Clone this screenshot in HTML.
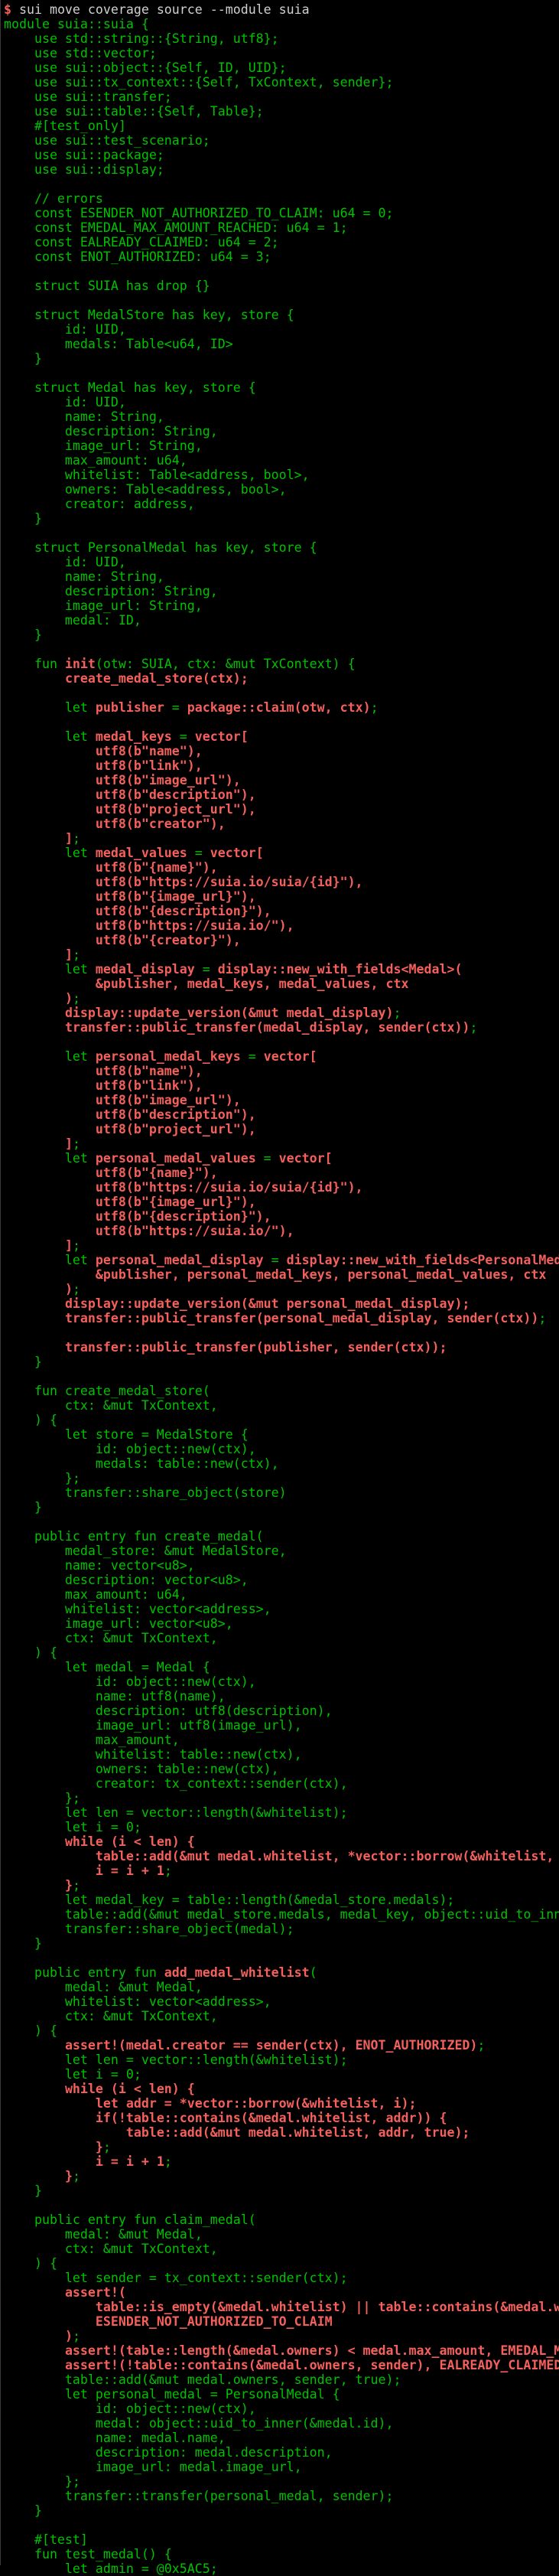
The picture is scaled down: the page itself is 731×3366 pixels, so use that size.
<!DOCTYPE html>
<html><head><meta charset="utf-8"><style>
html,body{margin:0;padding:0;background:#000;}
body{width:731px;height:3352px;overflow:hidden;border-left:1px solid #3a3a3a;box-sizing:border-box;}
pre{margin:0;padding:3px 0 0 4px;font-family:"DejaVu Sans Mono","Liberation Mono",monospace;font-size:16.6px;line-height:19px;color:#00c200;white-space:pre;overflow:hidden;}
.r{color:#f4605c;font-weight:bold;}
.w{color:#d0d0d0;}
</style></head><body><pre><span class="r">$</span><span class="w"> sui move coverage source --module suia</span>
module suia::suia {
    use std::string::{String, utf8};
    use std::vector;
    use sui::object::{Self, ID, UID};
    use sui::tx_context::{Self, TxContext, sender};
    use sui::transfer;
    use sui::table::{Self, Table};
    #[test_only]
    use sui::test_scenario;
    use sui::package;
    use sui::display;

    // errors
    const ESENDER_NOT_AUTHORIZED_TO_CLAIM: u64 = 0;
    const EMEDAL_MAX_AMOUNT_REACHED: u64 = 1;
    const EALREADY_CLAIMED: u64 = 2;
    const ENOT_AUTHORIZED: u64 = 3;

    struct SUIA has drop {}

    struct MedalStore has key, store {
        id: UID,
        medals: Table&lt;u64, ID&gt;
    }

    struct Medal has key, store {
        id: UID,
        name: String,
        description: String,
        image_url: String,
        max_amount: u64,
        whitelist: Table&lt;address, bool&gt;,
        owners: Table&lt;address, bool&gt;,
        creator: address,
    }

    struct PersonalMedal has key, store {
        id: UID,
        name: String,
        description: String,
        image_url: String,
        medal: ID,
    }

    fun <span class="r">init</span>(otw: SUIA, ctx: &amp;mut TxContext) {
        <span class="r">create_medal_store(ctx);</span>

        let <span class="r">publisher</span> = <span class="r">package::claim(otw, ctx)</span>;

        let <span class="r">medal_keys</span> = <span class="r">vector[</span>
<span class="r">            utf8(b"name"),
            utf8(b"link"),
            utf8(b"image_url"),
            utf8(b"description"),
            utf8(b"project_url"),
            utf8(b"creator"),</span>
        <span class="r">]</span>;
        let <span class="r">medal_values</span> = <span class="r">vector[</span>
<span class="r">            utf8(b"{name}"),
            utf8(b"https://suia.io/suia/{id}"),
            utf8(b"{image_url}"),
            utf8(b"{description}"),
            utf8(b"https://suia.io/"),
            utf8(b"{creator}"),</span>
        <span class="r">]</span>;
        let <span class="r">medal_display</span> = <span class="r">display::new_with_fields&lt;Medal&gt;(</span>
            <span class="r">&amp;publisher, medal_keys, medal_values, ctx</span>
        <span class="r">)</span>;
        <span class="r">display::update_version(&amp;mut medal_display)</span>;
        <span class="r">transfer::public_transfer(medal_display, sender(ctx))</span>;

        let <span class="r">personal_medal_keys</span> = <span class="r">vector[</span>
<span class="r">            utf8(b"name"),
            utf8(b"link"),
            utf8(b"image_url"),
            utf8(b"description"),
            utf8(b"project_url"),</span>
        <span class="r">]</span>;
        let <span class="r">personal_medal_values</span> = <span class="r">vector[</span>
<span class="r">            utf8(b"{name}"),
            utf8(b"https://suia.io/suia/{id}"),
            utf8(b"{image_url}"),
            utf8(b"{description}"),
            utf8(b"https://suia.io/"),</span>
        <span class="r">]</span>;
        let <span class="r">personal_medal_display</span> = <span class="r">display::new_with_fields&lt;PersonalMedal&gt;(</span>
            <span class="r">&amp;publisher, personal_medal_keys, personal_medal_values, ctx</span>
        <span class="r">)</span>;
        <span class="r">display::update_version(&amp;mut personal_medal_display);</span>
        <span class="r">transfer::public_transfer(personal_medal_display, sender(ctx))</span>;

        <span class="r">transfer::public_transfer(publisher, sender(ctx));</span>
    }

    fun create_medal_store(
        ctx: &amp;mut TxContext,
    ) {
        let store = MedalStore {
            id: object::new(ctx),
            medals: table::new(ctx),
        };
        transfer::share_object(store)
    }

    public entry fun create_medal(
        medal_store: &amp;mut MedalStore,
        name: vector&lt;u8&gt;,
        description: vector&lt;u8&gt;,
        max_amount: u64,
        whitelist: vector&lt;address&gt;,
        image_url: vector&lt;u8&gt;,
        ctx: &amp;mut TxContext,
    ) {
        let medal = Medal {
            id: object::new(ctx),
            name: utf8(name),
            description: utf8(description),
            image_url: utf8(image_url),
            max_amount,
            whitelist: table::new(ctx),
            owners: table::new(ctx),
            creator: tx_context::sender(ctx),
        };
        let len = vector::length(&amp;whitelist);
        let i = 0;
        <span class="r">while (i &lt; len) {</span>
            <span class="r">table::add(&amp;mut medal.whitelist, *vector::borrow(&amp;whitelist, i), true);</span>
            <span class="r">i = i + 1</span>;
        <span class="r">}</span>;
        let medal_key = table::length(&amp;medal_store.medals);
        table::add(&amp;mut medal_store.medals, medal_key, object::uid_to_inner(&amp;medal.id));
        transfer::share_object(medal);
    }

    public entry fun <span class="r">add_medal_whitelist</span>(
        medal: &amp;mut Medal,
        whitelist: vector&lt;address&gt;,
        ctx: &amp;mut TxContext,
    ) {
        <span class="r">assert!(medal.creator == sender(ctx), ENOT_AUTHORIZED)</span>;
        let len = vector::length(&amp;whitelist);
        let i = 0;
        <span class="r">while (i &lt; len) {</span>
            <span class="r">let addr = *vector::borrow(&amp;whitelist, i);</span>
            <span class="r">if(!table::contains(&amp;medal.whitelist, addr)) {</span>
                <span class="r">table::add(&amp;mut medal.whitelist, addr, true);</span>
            <span class="r">}</span>;
            <span class="r">i = i + 1</span>;
        <span class="r">}</span>;
    }

    public entry fun claim_medal(
        medal: &amp;mut Medal,
        ctx: &amp;mut TxContext,
    ) {
        let sender = tx_context::sender(ctx);
        <span class="r">assert!(</span>
            <span class="r">table::is_empty(&amp;medal.whitelist) || table::contains(&amp;medal.whitelist, sender),</span>
            <span class="r">ESENDER_NOT_AUTHORIZED_TO_CLAIM</span>
        <span class="r">)</span>;
        <span class="r">assert!(table::length(&amp;medal.owners) &lt; medal.max_amount, EMEDAL_MAX_AMOUNT_REACHED);</span>
        <span class="r">assert!(!table::contains(&amp;medal.owners, sender), EALREADY_CLAIMED);</span>
        table::add(&amp;mut medal.owners, sender, true);
        let personal_medal = PersonalMedal {
            id: object::new(ctx),
            medal: object::uid_to_inner(&amp;medal.id),
            name: medal.name,
            description: medal.description,
            image_url: medal.image_url,
        };
        transfer::transfer(personal_medal, sender);
    }

    #[test]
    fun test_medal() {
        let admin = @0x5AC5;
</pre></body></html>
